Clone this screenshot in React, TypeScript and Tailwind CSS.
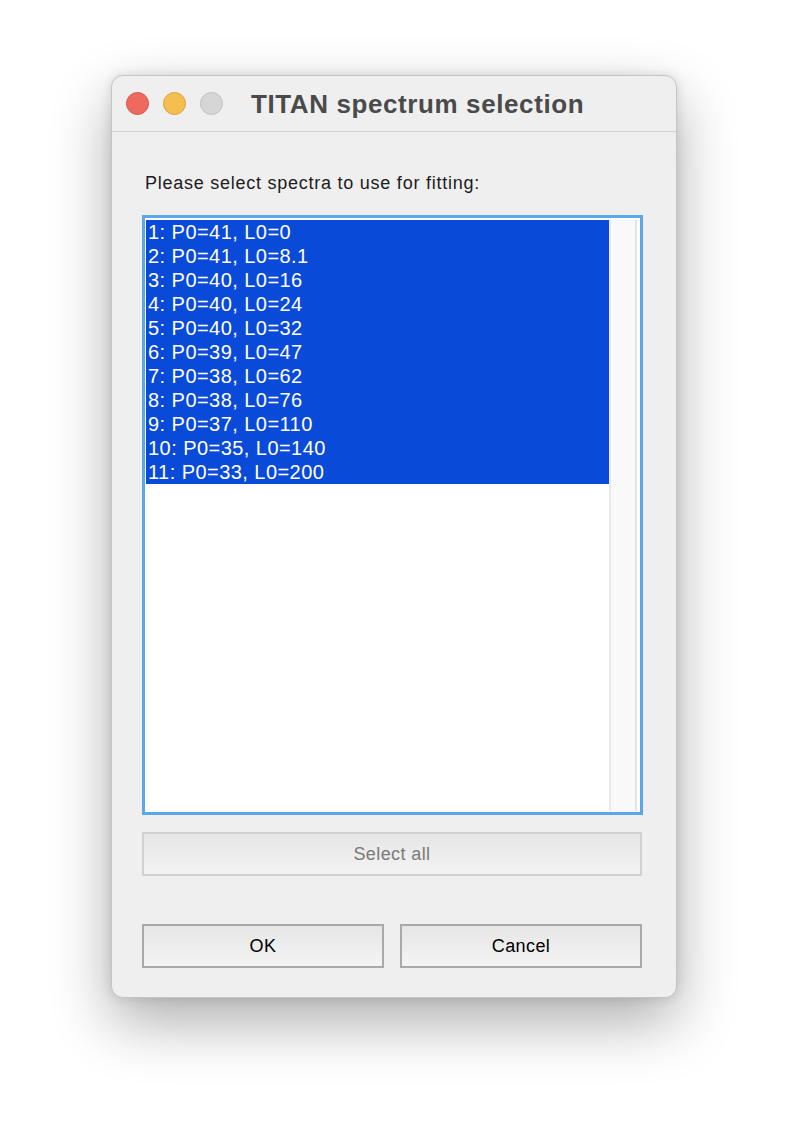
import React from 'react';

const spectra = [
  '1: P0=41, L0=0',
  '2: P0=41, L0=8.1',
  '3: P0=40, L0=16',
  '4: P0=40, L0=24',
  '5: P0=40, L0=32',
  '6: P0=39, L0=47',
  '7: P0=38, L0=62',
  '8: P0=38, L0=76',
  '9: P0=37, L0=110',
  '10: P0=35, L0=140',
  '11: P0=33, L0=200',
];

// mac window traffic light
const Light = ({ fill, ring }: { fill: string; ring: string }) => (
  <span className={`block w-[23px] h-[23px] rounded-full border ${fill} ${ring}`} />
);

export default function App() {
  return (
    <div
      className="w-[788px] h-[1146px] bg-white flex justify-center pt-[75px]"
      style={{ fontFamily: '"Liberation Sans", Arial, Helvetica, sans-serif' }}
    >
      <div className="w-[566px] h-[923px] rounded-[12px] border border-[#c4c4c4] bg-[#efefef] shadow-[0_24px_60px_rgba(0,0,0,0.32),0_0_12px_rgba(0,0,0,0.12)] overflow-hidden flex flex-col">
        {/* title bar */}
        <div className="h-[56px] border-b border-[#d2d2d2] flex items-center pl-[14px] shrink-0">
          <div className="flex items-center gap-[14px]">
            <Light fill="bg-[#ee6a5f]" ring="border-[#d4564c]" />
            <Light fill="bg-[#f5bf4f]" ring="border-[#d9a23f]" />
            <Light fill="bg-[#d6d6d6]" ring="border-[#c0c0c0]" />
          </div>
          <h1 className="ml-[28px] text-[26px] font-bold text-[#4a4a4a] leading-none tracking-[0.6px]">
            TITAN spectrum selection
          </h1>
        </div>

        {/* body */}
        <div className="flex-1 pl-[30px] flex flex-col">
          <p className="mt-[41px] text-[18px] leading-[20px] text-[#1c1c1c] pl-[3px] tracking-[0.75px]">
            Please select spectra to use for fitting:
          </p>

          <div className="mt-[22px] w-[501px] h-[600px] border-[3px] border-[#5ba7e9] bg-white pt-[2px] pl-[1px] pr-[1px] pb-[1px] flex">
            <ul className="w-[463px]">
              {spectra.map((s) => (
                <li
                  key={s}
                  className="h-[24px] bg-[#0a4ad8] text-white text-[20px] leading-[24px] pl-[2px] whitespace-nowrap tracking-[0.45px]"
                >
                  {s}
                </li>
              ))}
            </ul>
            <div className="flex-1 border-l-2 border-[#e8e8e8] bg-[#f9f9f9] mr-[2px] border-r-2 border-r-[#e3e3e3]" />
          </div>

          <button className="mt-[17px] w-[500px] h-[44px] border-2 border-[#d1d1d1] bg-gradient-to-b from-[#e6e6e6] to-[#f3f3f3] text-[18px] text-[#7a7a7a] tracking-[0.4px]">
            Select all
          </button>

          <div className="mt-[48px] w-[500px] flex gap-[16px]">
            <button className="w-[242px] h-[44px] border-2 border-[#a9a9a9] bg-gradient-to-b from-[#e6e6e6] to-[#f4f4f4] text-[18px] text-black tracking-[0.4px]">
              OK
            </button>
            <button className="w-[242px] h-[44px] border-2 border-[#a9a9a9] bg-gradient-to-b from-[#e6e6e6] to-[#f4f4f4] text-[18px] text-black tracking-[0.4px]">
              Cancel
            </button>
          </div>
        </div>
      </div>
    </div>
  );
}
